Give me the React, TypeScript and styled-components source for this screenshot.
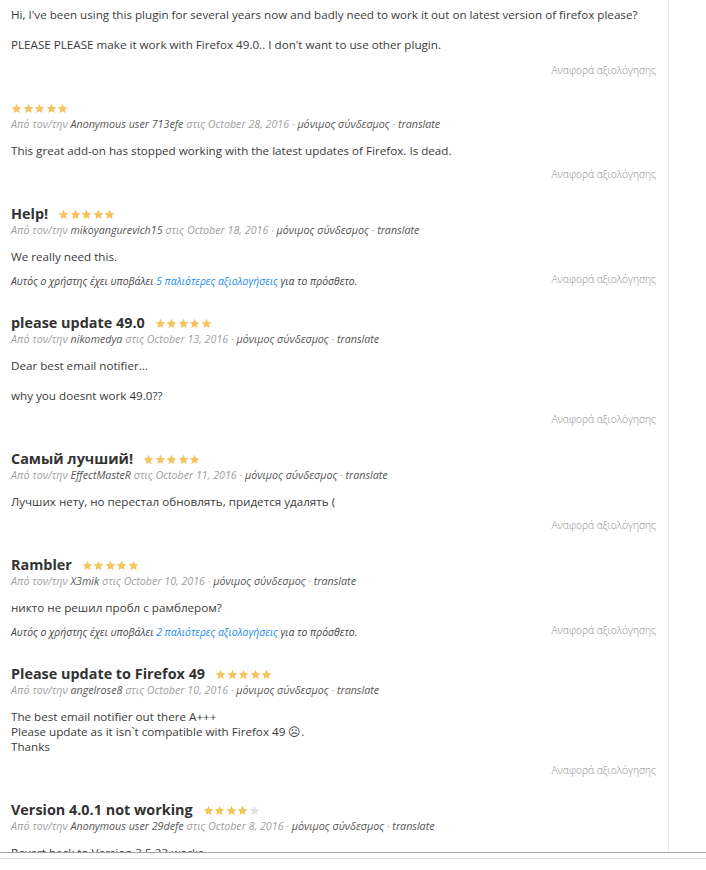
import React from "react";
import styled, { createGlobalStyle } from "styled-components";

const Global = createGlobalStyle`
  html, body { margin: 0; padding: 0; background: #fff; }
  body { font-family: "Open Sans", "Noto Sans", sans-serif; color: #333; }
`;

const Page = styled.div`
  width: 706px;
  height: 870px;
  display: flex;
  flex-direction: column;
  overflow: hidden;
`;

const Viewport = styled.div`
  height: 852px;
  overflow: hidden;
  flex: none;
  border-bottom: 1px solid #a9a9a9;
`;

const BottomBar = styled.div`
  height: 5px;
  border-bottom: 1px solid #dcdcdc;
  flex: none;
`;

const Main = styled.div`
  width: 645px;
  padding: 7px 12px 0 11px;
  border-right: 1px solid #ececec;
  min-height: 845px;
`;

const Review = styled.section<{ $gap: number }>`
  margin-bottom: ${(p) => p.$gap}px;
`;

const Header = styled.div`
  display: flex;
  align-items: center;
  height: 18px;
`;

const Title = styled.h3`
  margin: 0 10px 0 0;
  font-size: 14.4px;
  line-height: 18px;
  font-weight: 700;
  color: #333;
`;

const StarRow = styled.span`
  display: inline-flex;
  gap: 0.5px;
`;

const Meta = styled.div`
  font-size: 10.7px;
  line-height: 14px;
  font-style: italic;
  color: #a0a0a0;
  white-space: nowrap;
`;

const Strong = styled.span`
  color: #555;
`;

const Body = styled.div<{ $first?: boolean }>`
  margin-top: ${(p) => (p.$first ? "0" : "12px")};
  font-size: 11.65px;
  line-height: 15px;
  color: #3a3a3a;
`;

const Para = styled.p`
  margin: 0 0 15px;
  &:last-child { margin-bottom: 0; }
`;

const Footer = styled.div<{ $top: number }>`
  display: flex;
  justify-content: space-between;
  align-items: center;
  margin-top: ${(p) => p.$top}px;
`;

const Note = styled.span`
  font-size: 10.4px;
  line-height: 14px;
  font-style: italic;
  color: #444;
  transform: translateY(2px);
`;

const Link = styled.a`
  color: #1a8cf0;
  text-decoration: none;
`;

const Report = styled.span`
  margin-left: auto;
  font-size: 10.3px;
  line-height: 14px;
  font-weight: 300;
  color: #8e8e8e;
`;

const Star: React.FC<{ on: boolean }> = ({ on }) => (
  <svg width="11" height="11" viewBox="0 0 24 24">
    <path
      d="M12 1.5l3.2 7 7.6.8-5.7 5.1 1.6 7.5L12 18l-6.7 3.9 1.6-7.5L1.2 9.3l7.6-.8z"
      fill={on ? "#f6c35f" : "#e2e2e2"}
    />
  </svg>
);

const Stars: React.FC<{ n: number }> = ({ n }) => (
  <StarRow>
    {[0, 1, 2, 3, 4].map((i) => (
      <Star key={i} on={i < n} />
    ))}
  </StarRow>
);

type R = {
  title?: string;
  stars: number;
  user: string;
  date: string;
  body: string[][];
  older?: number;
  noHeader?: boolean;
};

const reviews: R[] = [
  {
    noHeader: true,
    stars: 5,
    user: "",
    date: "",
    body: [
      ["Hi, I've been using this plugin for several years now and badly need to work it out on latest version of firefox please?"],
      ["PLEASE PLEASE make it work with Firefox 49.0.. I don't want to use other plugin."],
    ],
  },
  {
    stars: 5,
    user: "Anonymous user 713efe",
    date: "October 28, 2016",
    body: [["This great add-on has stopped working with the latest updates of Firefox. Is dead."]],
  },
  {
    title: "Help!",
    stars: 5,
    user: "mikoyangurevich15",
    date: "October 18, 2016",
    body: [["We really need this."]],
    older: 5,
  },
  {
    title: "please update 49.0",
    stars: 5,
    user: "nikomedya",
    date: "October 13, 2016",
    body: [["Dear best email notifier..."], ["why you doesnt work 49.0??"]],
  },
  {
    title: "Самый лучший!",
    stars: 5,
    user: "EffectMasteR",
    date: "October 11, 2016",
    body: [["Лучших нету, но перестал обновлять, придется удалять ("]],
  },
  {
    title: "Rambler",
    stars: 5,
    user: "X3mik",
    date: "October 10, 2016",
    body: [["никто не решил пробл с рамблером?"]],
    older: 2,
  },
  {
    title: "Please update to Firefox 49",
    stars: 5,
    user: "angelrose8",
    date: "October 10, 2016",
    body: [
      [
        "The best email notifier out there A+++",
        "Please update as it isn`t compatible with Firefox 49 \u2639.",
        "Thanks",
      ],
    ],
  },
  {
    title: "Version 4.0.1 not working",
    stars: 4,
    user: "Anonymous user 29defe",
    date: "October 8, 2016",
    body: [["Revert back to Version 3.5.23 works"]],
  },
];

const ReviewItem: React.FC<{ r: R }> = ({ r }) => (
  <Review $gap={r.noHeader ? 22 : r.older ? 28 : 24}>
    {!r.noHeader && (
      <>
        <Header>
          {r.title && <Title>{r.title}</Title>}
          <Stars n={r.stars} />
        </Header>
        <Meta>
          Από τον/την <Strong>{r.user}</Strong> στις {r.date} · <Strong>μόνιμος σύνδεσμος</Strong> ·{" "}
          <Strong>translate</Strong>
        </Meta>
      </>
    )}
    <Body $first={r.noHeader}>
      {r.body.map((p, i) => (
        <Para key={i}>
          {p.map((line, j) => (
            <React.Fragment key={j}>
              {j > 0 && <br />}
              {line}
            </React.Fragment>
          ))}
        </Para>
      ))}
    </Body>
    <Footer $top={r.noHeader ? 11 : r.older ? 8 : 9}>
      {r.older && (
        <Note>
          Αυτός ο χρήστης έχει υποβάλει <Link href="#">{r.older} παλιότερες αξιολογήσεις</Link> για το
          πρόσθετο.
        </Note>
      )}
      <Report>Αναφορά αξιολόγησης</Report>
    </Footer>
  </Review>
);

export default function App() {
  return (
    <Page>
      <Global />
      <Viewport>
        <Main>
          {reviews.map((r, i) => (
            <ReviewItem key={i} r={r} />
          ))}
        </Main>
      </Viewport>
      <BottomBar />
    </Page>
  );
}
